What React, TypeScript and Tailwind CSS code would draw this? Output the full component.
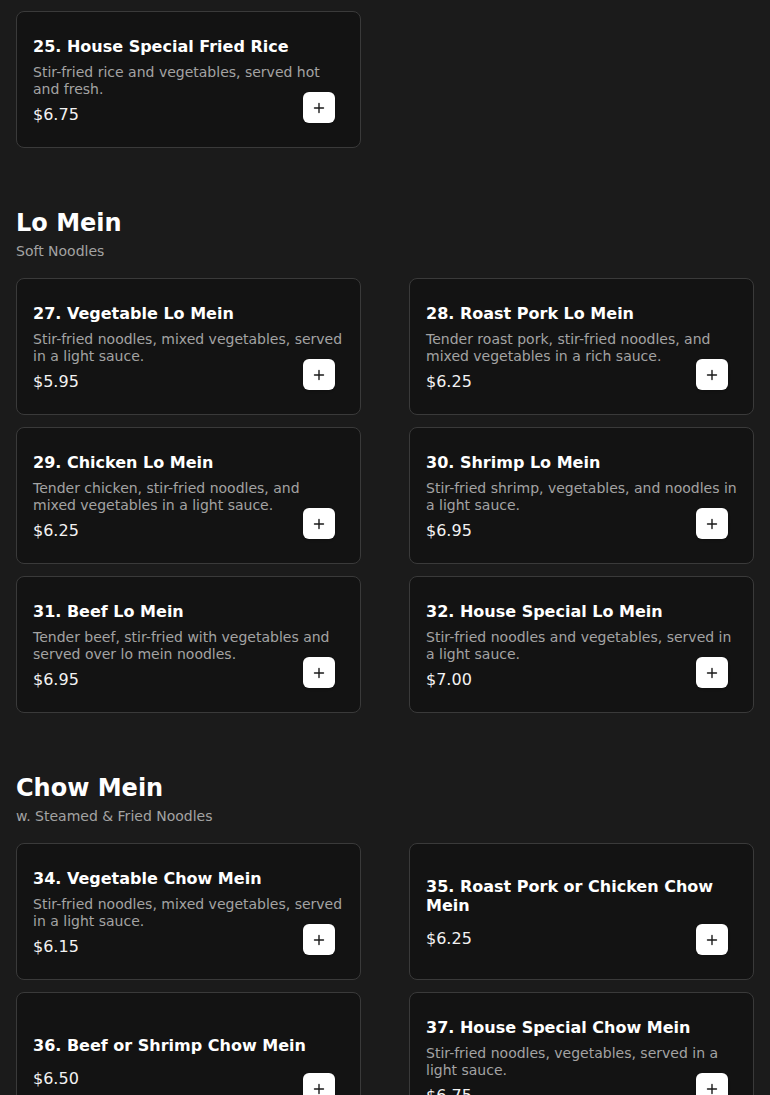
import React from 'react';

interface MenuItem {
  num: number;
  name: string;
  desc?: string;
  price: string;
}

interface MenuSection {
  title?: string;
  subtitle?: string;
  items: MenuItem[];
}

const sections: MenuSection[] = [
  {
    items: [
      { num: 25, name: 'House Special Fried Rice', desc: 'Stir-fried rice and vegetables, served hot and fresh.', price: '6.75' },
    ],
  },
  {
    title: 'Lo Mein',
    subtitle: 'Soft Noodles',
    items: [
      { num: 27, name: 'Vegetable Lo Mein', desc: 'Stir-fried noodles, mixed vegetables, served in a light sauce.', price: '5.95' },
      { num: 28, name: 'Roast Pork Lo Mein', desc: 'Tender roast pork, stir-fried noodles, and mixed vegetables in a rich sauce.', price: '6.25' },
      { num: 29, name: 'Chicken Lo Mein', desc: 'Tender chicken, stir-fried noodles, and mixed vegetables in a light sauce.', price: '6.25' },
      { num: 30, name: 'Shrimp Lo Mein', desc: 'Stir-fried shrimp, vegetables, and noodles in a light sauce.', price: '6.95' },
      { num: 31, name: 'Beef Lo Mein', desc: 'Tender beef, stir-fried with vegetables and served over lo mein noodles.', price: '6.95' },
      { num: 32, name: 'House Special Lo Mein', desc: 'Stir-fried noodles and vegetables, served in a light sauce.', price: '7.00' },
    ],
  },
  {
    title: 'Chow Mein',
    subtitle: 'w. Steamed & Fried Noodles',
    items: [
      { num: 34, name: 'Vegetable Chow Mein', desc: 'Stir-fried noodles, mixed vegetables, served in a light sauce.', price: '6.15' },
      { num: 35, name: 'Roast Pork or Chicken Chow Mein', price: '6.25' },
      { num: 36, name: 'Beef or Shrimp Chow Mein', price: '6.50' },
      { num: 37, name: 'House Special Chow Mein', desc: 'Stir-fried noodles, vegetables, served in a light sauce.', price: '6.75' },
    ],
  },
];

function AddButton() {
  return (
    <button
      type="button"
      aria-label="Add to order"
      className="absolute bottom-6 right-[25px] flex h-[31px] w-8 items-center justify-center rounded-md bg-white text-[#1a1a1a] shadow-sm"
    >
      <svg width="12" height="12" viewBox="0 0 12 12" fill="none" stroke="currentColor" strokeWidth="1.4" strokeLinecap="round">
        <path d="M6 1.5v9M1.5 6h9" />
      </svg>
    </button>
  );
}

function ItemCard({ item }: { item: MenuItem }) {
  return (
    <div className="relative flex flex-col justify-center rounded-lg border border-[#3a3a3a] bg-[#131313] px-4 pt-[25px] pb-5">
      <h3 className="mb-2 text-base font-bold leading-[19px] text-white">
        {item.num}. {item.name}
      </h3>
      {item.desc && (
        <p className="mb-px text-sm leading-[17px] text-[#a3a3a3]">{item.desc}</p>
      )}
      <p className="mt-1 text-base leading-6 text-[#f2f2f2]">${item.price}</p>
      <AddButton />
    </div>
  );
}

export default function App() {
  return (
    <div
      className="h-[1095px] overflow-hidden bg-[#1b1b1b] px-4 pt-[11px]"
      style={{ fontFamily: '"DejaVu Sans", Verdana, sans-serif' }}
    >
      <div className="flex flex-col gap-[59px]">
        {sections.map((section, i) => (
          <section key={i}>
            {section.title && (
              <div className="mb-[17px]">
                <h2 className="text-2xl font-bold leading-8 text-white">{section.title}</h2>
                <p className="mt-[2px] text-sm leading-5 text-[#a3a3a3]">{section.subtitle}</p>
              </div>
            )}
            <div className="grid grid-cols-2 gap-x-12 gap-y-3">
              {section.items.map((item) => (
                <ItemCard key={item.num} item={item} />
              ))}
            </div>
          </section>
        ))}
      </div>
    </div>
  );
}
